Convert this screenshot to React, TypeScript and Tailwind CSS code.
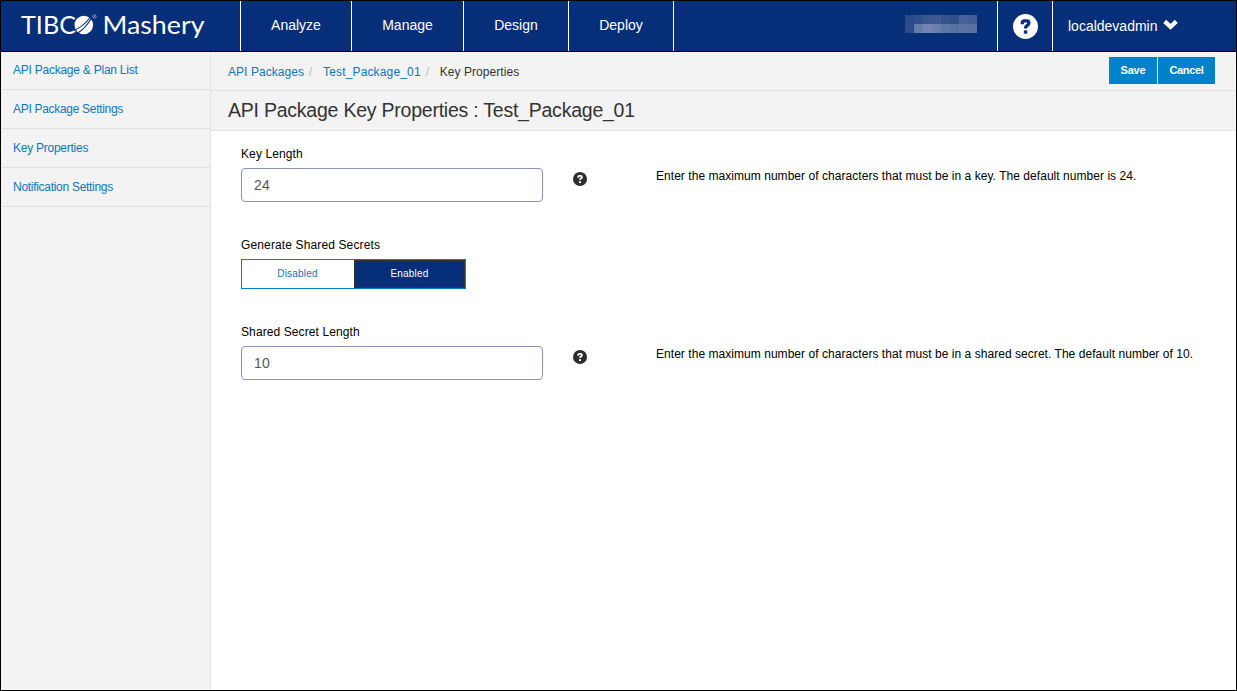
import React from "react";

const mosaic = [
  ["#294a88", "#31508b", "#3a578f", "#3c5991", "#35538d", "#304f8a", "#48639a", "#415d95"],
  ["#2d4c88", "#657cab", "#7385b0", "#6a7fac", "#5d76a6", "#5871a3", "#5b74a5", "#5a72a3"],
];

function HelpIcon({ className, mark }: { className: string; mark: string }) {
  return (
    <svg viewBox="0 0 24 24" className={className}>
      <circle cx="12" cy="12" r="12" fill="currentColor" />
      <path d="M8.900 9.800 V8.700 Q8.900 6.600 11 6.600 H13.300 Q15.300 6.600 15.300 8.500 Q15.300 9.900 14 10.800 Q12 12 12 13.900" fill="none" stroke={mark} strokeWidth="3.100" />
      <rect x="10.400" y="15.700" width="3.300" height="3.200" fill={mark} />
    </svg>
  );
}

function NavItem({ label, className }: { label: string; className: string }) {
  return (
    <a className={`flex shrink-0 items-center justify-center border-r border-white pb-[2px] text-sm text-white ${className}`}>
      {label}
    </a>
  );
}

function SideItem({ label, className }: { label: string; className: string }) {
  return <li className={`flex h-[39px] items-center border-b border-[#e2e2e2] pl-3 ${className}`}>{label}</li>;
}

function Field({ label, value, help }: { label: string; value: string; help: string }) {
  return (
    <div>
      <label className="block h-[22px] leading-4 tracking-[0.1px]">{label}</label>
      <div className="flex">
        <input
          readOnly
          value={value}
          className="h-[34px] w-[302px] rounded border border-[#8796b4] bg-white px-3 text-[14px] tracking-[0.2px] text-[#555] outline-none"
        />
        <HelpIcon className="mt-[4px] ml-[30px] size-[14px] text-[#2d2d2d]" mark="#fff" />
        <p className="ml-[69px] leading-4 tracking-[0.045px] whitespace-nowrap">{help}</p>
      </div>
    </div>
  );
}

function Logo() {
  return (
    <div className="flex w-[239px] shrink-0 items-center pl-5">
      <svg width="190" height="50" viewBox="0 0 190 50" fill="#fff" fontFamily="Lato, sans-serif">
        <text x="0" y="32.500" fontSize="24.5" textLength="55" lengthAdjust="spacingAndGlyphs">TIBC</text>
        <circle cx="62.800" cy="24" r="9.300" />
        <path d="M53 29.500 Q63 25 69.500 16 M56 32.500 Q65 27 70.500 17" fill="none" stroke="#062e79" strokeWidth="1.100" />
        <circle cx="73.500" cy="15.500" r="1.700" fill="none" stroke="#a9b8d4" strokeWidth=".7" />
        <circle cx="73.500" cy="15.500" r=".6" fill="#a9b8d4" />
        <text x="81.500" y="32.500" fontSize="24.5" textLength="102" lengthAdjust="spacingAndGlyphs">Mashery</text>
      </svg>
    </div>
  );
}

export default function App() {
  return (
    <div className="flex h-[691px] w-[1237px] flex-col overflow-hidden border border-black bg-white font-['Liberation_Sans',Arial,sans-serif] text-[12px] text-black">
      <header className="flex h-[51px] shrink-0 border-b border-black bg-[#062e79]">
        <Logo />
        <nav className="flex border-l border-white">
          <NavItem label="Analyze" className="w-[111px]" />
          <NavItem label="Manage" className="w-[112px]" />
          <NavItem label="Design" className="w-[105px]" />
          <NavItem label="Deploy" className="w-[105px]" />
        </nav>
        <div className="mt-[14px] mr-5 ml-auto grid h-[18px] w-[72px] grid-cols-8">
          {mosaic.flat().map((c, i) => (
            <span key={i} style={{ backgroundColor: c }} />
          ))}
        </div>
        <div className="flex w-[56px] items-center justify-center border-x border-white">
          <HelpIcon className="mt-px size-[25px] text-white" mark="#062e79" />
        </div>
        <div className="flex w-[183px] items-center gap-[5px] pl-[15px] text-[14px] text-white">
          localdevadmin
          <svg width="15" height="11" viewBox="0 0 15 11" className="-mt-[3px]">
            <path d="M1.700 2.400 L7.500 7.800 L13.300 2.400" fill="none" stroke="#fff" strokeWidth="4.300" />
          </svg>
        </div>
      </header>

      <div className="flex min-h-0 flex-1">
        <aside className="w-[210px] shrink-0 border-r border-[#e2e2e2] bg-[#f3f3f3] text-[#0f75c4]">
          <ul className="-mt-px">
            <SideItem label="API Package & Plan List" className="tracking-[-0.24px]" />
            <SideItem label="API Package Settings" className="tracking-[-0.3px]" />
            <SideItem label="Key Properties" className="tracking-[-0.25px]" />
            <SideItem label="Notification Settings" className="tracking-[-0.29px]" />
          </ul>
        </aside>

        <main className="flex-1">
          <div className="flex h-[39px] justify-between border-b border-[#e2e2e2] bg-[#f3f3f3] pr-[21px] pl-[17px]">
            <div className="flex items-center pt-[2px] text-[#0f75c4]">
              <a className="tracking-[0.05px]">API Packages</a>
              <span className="ml-[5px] w-[14px] text-[#bbb]">/</span>
              <a className="tracking-[0.16px]">Test_Package_01</a>
              <span className="ml-[5px] w-[14px] text-[#bbb]">/</span>
              <span className="tracking-[0.05px] text-[#333]">Key Properties</span>
            </div>
            <div className="mt-[5px] flex h-[27px] gap-px text-[11px] font-bold text-white">
              <button className="w-[48px] bg-[#0081cc] tracking-[-0.2px]">Save</button>
              <button className="w-[57px] bg-[#0081cc] tracking-[-0.35px]">Cancel</button>
            </div>
          </div>
          <h1 className="flex h-10 items-center border-b border-[#e2e2e2] bg-[#f3f3f3] pt-px pl-[17px] text-[19.5px] tracking-[-0.23px] text-[#333]">
            API Package Key Properties : Test_Package_01
          </h1>

          <div className="pt-[15px] pl-[30px]">
            <Field
              label="Key Length"
              value="24"
              help="Enter the maximum number of characters that must be in a key. The default number is 24."
            />
            <div className="mt-[35px]">
              <div className="h-[22px] leading-4 tracking-[0.13px]">Generate Shared Secrets</div>
              <div className="flex h-[30px] w-[225px] border border-[#0081cc] text-[10px] tracking-[0.2px]">
                <button className="w-[112px] pr-px pb-[2px] text-[#0f75c4]">Disabled</button>
                <button className="flex-1 border border-[#333] bg-[#062e79] pb-[2px] text-white">Enabled</button>
              </div>
            </div>
            <div className="mt-[35px]">
              <Field
                label="Shared Secret Length"
                value="10"
                help="Enter the maximum number of characters that must be in a shared secret. The default number of 10."
              />
            </div>
          </div>
        </main>
      </div>
    </div>
  );
}
